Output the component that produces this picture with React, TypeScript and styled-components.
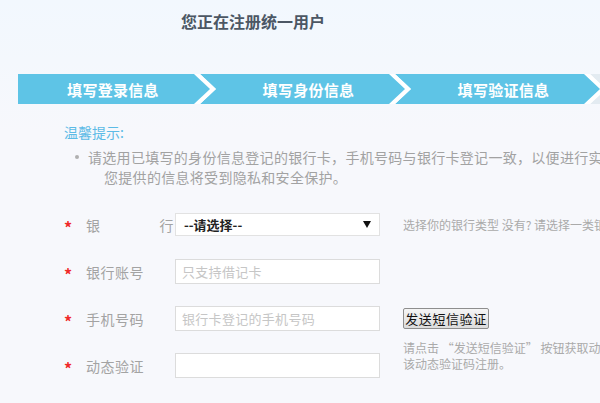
import * as React from 'react';
import styled, { createGlobalStyle } from 'styled-components';

const GlobalStyle = createGlobalStyle`
  html, body {
    margin: 0;
    padding: 0;
    overflow: hidden;
  }
  * {
    box-sizing: border-box;
  }
`;

const FONT = `"Noto Sans CJK SC", "Noto Sans", "Liberation Sans", sans-serif`;

const Page = styled.div`
  width: 600px;
  height: 403px;
  overflow: hidden;
  font-family: ${FONT};
  background: linear-gradient(180deg, #f2f8fe 0px, #f4f8fd 60px, #f7f8fc 130px, #f7f8fc 100%);
`;

const Title = styled.h1`
  margin: 0 0 0 18px;
  padding-top: 9px;
  width: 470px;
  height: 33px;
  text-align: center;
  font-size: 16px;
  line-height: 24px;
  font-weight: bold;
  color: #4c5764;
`;

const Steps = styled.div`
  display: flex;
  margin-top: 41px;
  padding-left: 18px;
  height: 30px;
  overflow: hidden;
`;

const Step = styled.div<{ $first?: boolean; $todo?: boolean; $w: number }>`
  position: relative;
  flex: none;
  width: ${(p) => p.$w}px;
  height: 30px;
  margin-left: ${(p) => (p.$first ? '0' : '-16px')};
  display: flex;
  align-items: center;
  justify-content: center;
  padding-left: ${(p) => (p.$first ? '0' : '6px')};
  padding-right: ${(p) => (p.$first ? '8px' : '0')};
  background: #ffffff;
  clip-path: polygon(
    0 0,
    calc(100% - 16px) 0,
    100% 50%,
    calc(100% - 16px) 100%,
    0 100%,
    ${(p) => (p.$first ? '0 50%' : '16px 50%')}
  );
  color: #ffffff;
  font-size: 15px;
  font-weight: bold;
  letter-spacing: 0.3px;

  &::before {
    content: '';
    position: absolute;
    inset: 0;
    background: ${(p) => (p.$todo ? '#e3ebf1' : '#5ec4e6')};
    clip-path: polygon(
      0 0,
      calc(100% - 22px) 0,
      calc(100% - 6px) 50%,
      calc(100% - 22px) 100%,
      0 100%,
      ${(p) => (p.$first ? '0 50%' : '16px 50%')}
    );
  }

  span {
    position: relative;
  }
`;

const Notice = styled.div`
  margin-top: 18px;
  padding-left: 64px;
  white-space: nowrap;
`;

const NoticeTitle = styled.div`
  font-size: 14px;
  line-height: 20px;
  color: #5cbbe6;
`;

const NoticeLine = styled.div<{ $indent?: boolean }>`
  display: flex;
  align-items: center;
  margin-top: ${(p) => (p.$indent ? '0' : '5px')};
  padding-left: ${(p) => (p.$indent ? '40px' : '11px')};
  font-size: 14px;
  line-height: 20px;
  letter-spacing: 0.3px;
  color: #a2a2a2;
`;

const Dot = styled.span`
  flex: none;
  width: 4px;
  height: 4px;
  border-radius: 50%;
  background: #b0b0b0;
  margin-right: 9px;
`;

const Form = styled.div`
  margin-top: 14px;
`;

const Row = styled.div`
  display: flex;
  align-items: center;
  height: 47px;
  padding-left: 64px;
  white-space: nowrap;

  & > * {
    flex: none;
  }
`;

const Star = styled.span`
  width: 22px;
  color: #f02a2a;
  font-size: 16px;
  font-weight: bold;
  line-height: 1;
  padding-top: 4px;
`;

const Label = styled.label<{ $spread?: boolean }>`
  display: flex;
  justify-content: ${(p) => (p.$spread ? 'space-between' : 'flex-start')};
  width: ${(p) => (p.$spread ? '88px' : '89px')};
  margin-right: ${(p) => (p.$spread ? '1px' : '0')};
  font-size: 14px;
  letter-spacing: 0.5px;
  color: #a3a3a3;
`;

const Field = styled.input`
  width: 205px;
  height: 25px;
  padding: 0 6px;
  border: 1px solid #dcdcdc;
  background: #ffffff;
  font-family: ${FONT};
  font-size: 13px;
  color: #333;
  outline: none;

  &::placeholder {
    color: #c6c6c6;
    letter-spacing: 0.3px;
  }
`;

const SelectBox = styled.div`
  display: flex;
  align-items: center;
  justify-content: space-between;
  width: 205px;
  height: 23px;
  padding: 0 8px 0 8px;
  border: 1px solid #e2e2e2;
  background: #ffffff;
  font-size: 13px;
  font-weight: bold;
  color: #222;
`;

const Caret = styled.span`
  width: 0;
  height: 0;
  border-left: 4px solid transparent;
  border-right: 4px solid transparent;
  border-top: 7px solid #111;
`;

const Hint = styled.div<{ $raise?: boolean }>`
  margin-left: 23px;
  margin-bottom: ${(p) => (p.$raise ? '20px' : '0')};
  font-size: 12px;
  line-height: 16px;
  color: #aaaaaa;
`;

const SendButton = styled.button`
  margin-left: 23px;
  width: 86px;
  height: 21px;
  padding: 0;
  border: 1px solid #8e8e8e;
  border-radius: 2px;
  background: linear-gradient(180deg, #f5f5f5, #dcdcdc);
  font-family: ${FONT};
  font-size: 13px;
  letter-spacing: 0.6px;
  color: #111;
`;

const steps = ['填写登录信息', '填写身份信息', '填写验证信息'];

export default function App() {
  return (
    <Page>
      <GlobalStyle />
      <Title>您正在注册统一用户</Title>

      <Steps>
        {steps.map((s, i) => (
          <Step key={s} $first={i === 0} $w={i === 0 ? 198 : 211}>
            <span>{s}</span>
          </Step>
        ))}
        <Step $todo $w={120} />
      </Steps>

      <Notice>
        <NoticeTitle>温馨提示:</NoticeTitle>
        <NoticeLine>
          <Dot />
          请选用已填写的身份信息登记的银行卡，手机号码与银行卡登记一致，以便进行实名认证，
        </NoticeLine>
        <NoticeLine $indent>您提供的信息将受到隐私和安全保护。</NoticeLine>
      </Notice>

      <Form>
        <Row>
          <Star>*</Star>
          <Label $spread>
            <span>银</span>
            <span>行</span>
          </Label>
          <SelectBox>
            <span>--请选择--</span>
            <Caret />
          </SelectBox>
          <Hint>选择你的银行类型 没有? 请选择一类银行</Hint>
        </Row>
        <Row>
          <Star>*</Star>
          <Label>银行账号</Label>
          <Field placeholder="只支持借记卡" />
        </Row>
        <Row>
          <Star>*</Star>
          <Label>手机号码</Label>
          <Field placeholder="银行卡登记的手机号码" />
          <SendButton>发送短信验证</SendButton>
        </Row>
        <Row>
          <Star>*</Star>
          <Label>动态验证</Label>
          <Field />
          <Hint $raise>
            请点击 “发送短信验证” 按钮获取动态验证码，并填写
            <br />
            该动态验证码注册。
          </Hint>
        </Row>
      </Form>
    </Page>
  );
}
